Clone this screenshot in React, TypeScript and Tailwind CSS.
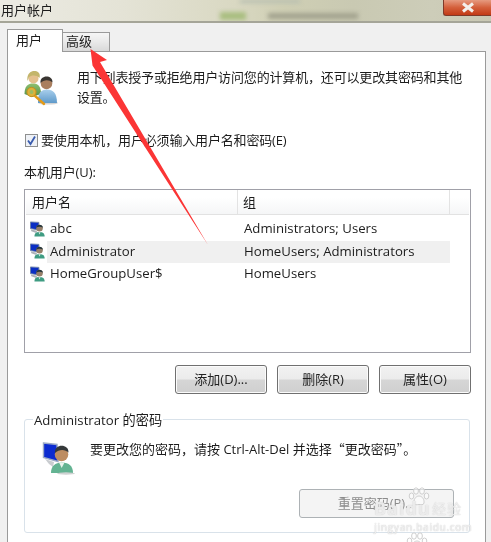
import React from "react";

const font = { fontFamily: '"Open Sans","Noto Sans CJK SC",sans-serif' };

function SmallUser() {
  return (
    <svg width="16" height="17" viewBox="0 0 18 18" className="shrink-0">
      <path d="M0.5 0.5 L10 1 L10 9.5 L0.5 8 Z" fill="#0b2fc4" stroke="#6b7fa6" strokeWidth="1" />
      <path d="M1 9 L8 10.5 L7 13 L1.5 11 Z" fill="#aeb2b8" />
      <path d="M5 17 C5 13 7 11.8 10.5 11.8 C14 11.8 16.5 13 16.5 17 Z" fill="#3f9c82" />
      <path d="M9.5 12 L10.7 14.5 L12 12 Z" fill="#d8ece4" />
      <circle cx="10.7" cy="7.6" r="3.7" fill="#97806a" />
      <path d="M7 7 C7 2.5 14.5 2.5 14.5 7 C12.5 5.4 9 5.4 7 7 Z" fill="#28383c" />
    </svg>
  );
}

function UsersIcon() {
  return (
    <svg width="34" height="36" viewBox="0 0 34 36" className="shrink-0">
      <defs>
        <linearGradient id="blueShirt" x1="0" y1="0" x2="0" y2="1">
          <stop offset="0" stopColor="#a9cfec" />
          <stop offset="1" stopColor="#5f9aca" />
        </linearGradient>
        <linearGradient id="greenShirt" x1="0" y1="0" x2="0" y2="1">
          <stop offset="0" stopColor="#8fc06f" />
          <stop offset="1" stopColor="#4f8f4c" />
        </linearGradient>
      </defs>
      <ellipse cx="24" cy="33" rx="10" ry="1.6" fill="#d4d4d4" />
      <path d="M0.5 24 C0.5 16 4 13.5 9 13.5 C14 13.5 17 16 17 24 L8 27 Z" fill="url(#greenShirt)" />
      <circle cx="9.5" cy="8.5" r="5" fill="#e4c08e" />
      <path d="M3.5 11 C2 2 10 -1 14.5 2.5 C16 4 16 6 15.5 8 C13 4.5 7 5 5 7 Z" fill="#c3b56b" />
      <path d="M14 33 C13.5 23 17 19.5 23 19.5 C29 19.5 33 23 33 33 Z" fill="url(#blueShirt)" />
      <circle cx="22.5" cy="13.5" r="5.8" fill="#a97e5e" />
      <path d="M16.5 13 C15.5 4.5 29 4.5 28.5 12.5 C25 9.5 20 9.5 16.5 13 Z" fill="#3a3632" />
      <path d="M10 25 L20 34" stroke="#e49a17" strokeWidth="2.4" strokeLinecap="round" />
      <circle cx="7.5" cy="22" r="4.6" fill="#dcb23a" stroke="#c4901c" strokeWidth="1" />
      <circle cx="7.5" cy="22" r="1.9" fill="#9dbb63" />
    </svg>
  );
}

function PasswordUser() {
  return (
    <svg width="34" height="33" viewBox="0 0 34 33" className="shrink-0">
      <path d="M1.5 1 L15 2.5 L16 19.5 L1.5 15.5 Z" fill="#0c2bd0" stroke="#9aa9c6" strokeWidth="1.4" />
      <path d="M3 17 L12 20 L11 25 L7 22 Z" fill="#c9ccd0" />
      <path d="M9 31 C9 24 13 20.5 20 20.5 C27 20.5 31 24 31 31 Z" fill="#63b392" />
      <path d="M17 20.5 L19.7 26 L22.5 20.5 Z" fill="#e8f2ec" />
      <circle cx="19.5" cy="12.5" r="6.8" fill="#bd8d62" />
      <path d="M13 11 C12 1.5 27 1.5 26.5 10.5 C23 7 17 7 13 11 Z" fill="#35393a" />
      <ellipse cx="24" cy="31.5" rx="9" ry="1.2" fill="#cfd2d2" />
    </svg>
  );
}

function Paw({ className = "" }: { className?: string }) {
  return (
    <svg width="22" height="20" viewBox="0 0 22 20" className={className}>
      <g fill="#ffffff" fillOpacity="0.55" stroke="#cfcfcf" strokeWidth="1">
        <ellipse cx="3.5" cy="9" rx="2.3" ry="3" />
        <ellipse cx="8" cy="4" rx="2.4" ry="3.2" />
        <ellipse cx="14" cy="4" rx="2.4" ry="3.2" />
        <ellipse cx="18.5" cy="9" rx="2.3" ry="3" />
        <path d="M11 9 C7.5 9 5.5 13 6 16 C6.5 18.5 9.5 17.5 11 17.5 C12.5 17.5 15.5 18.5 16 16 C16.5 13 14.5 9 11 9 Z" />
      </g>
    </svg>
  );
}

function WinButton({ children, className = "" }: { children: React.ReactNode; className?: string }) {
  return (
    <button
      className={`h-[29px] rounded-[3px] border border-[#707070] bg-[linear-gradient(#f2f2f2,#ebebeb_48%,#d6d6d6_52%,#cfcfcf)] shadow-[inset_0_0_0_1px_#fbfbfb] text-[13px] text-[#222] ${className}`}
    >
      {children}
    </button>
  );
}

const rows = [
  { name: "abc", group: "Administrators; Users" },
  { name: "Administrator", group: "HomeUsers; Administrators", selected: true },
  { name: "HomeGroupUser$", group: "HomeUsers" },
];

export default function App() {
  return (
    <div style={font} className="relative h-[542px] w-[491px] overflow-hidden bg-[#f0f0f0] text-[13px] text-[#1c1c1c] blur-[0.3px]">
      {/* title bar */}
      <div className="relative flex h-[23px] items-start justify-between overflow-hidden border-b-2 border-[#a5a598] bg-[linear-gradient(90deg,#ecebe3_0%,#e4e3d6_25%,#d9d8c2_48%,#cfcfb4_58%,#c9c9b2_72%,#cdcdb9_88%,#c9c8b4_100%)]">
        <span className="z-10 pl-px pt-px text-[13px] leading-[18px]">用户帐户</span>
        <div className="absolute left-[220px] top-[12px] h-[8px] w-[26px] bg-[#a9be80] blur-[2px]" />
        <div className="absolute left-[268px] top-[13px] h-[6px] w-[90px] bg-[#a3a38f] blur-[2px]" />
        <div className="absolute left-[240px] top-0 h-[3px] w-[60px] bg-[#b5bdb0] blur-[2px]" />
        <div className="z-10 flex h-[16px] w-[48px] items-center justify-center rounded-bl-[3px] border-b border-l border-[#7f3a2a] bg-[linear-gradient(#e69a80,#d4603c_50%,#c23a16)]">
          <svg width="14" height="11" viewBox="0 0 14 11">
            <path d="M2 1.5 L12 9.5 M12 1.5 L2 9.5" stroke="#f4f0ec" strokeWidth="3" />
          </svg>
        </div>
      </div>

      {/* tabs */}
      <div className="flex h-[28px] items-end pl-[7px] pt-[6px]">
        <div className="z-10 -mb-px flex h-[23px] w-[56px] items-start border border-b-0 border-[#9a9a9a] bg-white pl-[8px] pt-px text-[13px] leading-[18px]">
          用户
        </div>
        <div className="flex h-[19px] w-[47px] items-center border border-b-0 border-l-0 border-[#9a9a9a] bg-[linear-gradient(#f6f6f6,#e9e9e9_50%,#d9d9d9)] pl-[3px] text-[13px]">
          高级
        </div>
      </div>

      {/* panel */}
      <div className="ml-[7px] h-[600px] w-[479px] border border-[#9a9a9a] bg-white">
        <div className="flex pl-[16px] pr-[14px] pt-[15px]">
          <div className="w-[53px] pt-[3px]">
            <UsersIcon />
          </div>
          <p className="w-[395px] leading-[20px] tracking-[-0.16px]">
            用下列表授予或拒绝用户访问您的计算机，还可以更改其密码和其他设置。
          </p>
        </div>

        <div className="mt-[23px] flex items-center gap-[3px] pl-[17px]">
          <div className="flex h-[13px] w-[13px] items-center justify-center border border-[#8e8f8f] bg-[#eef1f6]">
            <svg width="11" height="11" viewBox="0 0 11 11">
              <path d="M2 5.5 L4.5 9 L9 1.5" fill="none" stroke="#3a5cae" strokeWidth="1.8" />
            </svg>
          </div>
          <span className="leading-[20px] tracking-[-0.16px]">要使用本机，用户必须输入用户名和密码(E)</span>
        </div>

        <div className="mt-[13px] pl-[16px] leading-[18px] tracking-[-0.1px]">本机用户(U):</div>

        {/* list */}
        <div className="ml-[16px] mt-[8px] h-[164px] w-[447px] border border-[#a0a0a8] bg-white">
          <div className="mx-[1px] flex h-[25px] items-center border-b border-[#e2e2e2] bg-[linear-gradient(#ffffff_30%,#f5f6f7)]">
            <div className="w-[212px] border-r border-[#e3e3e3] pl-[6px] leading-[24px]">用户名</div>
            <div className="w-[212px] border-r border-[#e3e3e3] pl-[5px] leading-[24px]">组</div>
          </div>
          <div className="pt-[3px]">
            {rows.map((r) => (
              <div key={r.name} className="flex h-[22.5px] items-center">
                <div className="flex w-[22px] justify-end pr-[1px]">
                  <SmallUser />
                </div>
                <div className={`flex h-[22px] w-[403px] items-center ${r.selected ? "bg-[#f0f0f0]" : ""}`}>
                  <span className="w-[197px] pl-[3px] text-[13.2px]">{r.name}</span>
                  <span className="text-[13.2px]">{r.group}</span>
                </div>
              </div>
            ))}
          </div>
        </div>

        {/* buttons */}
        <div className="ml-[167px] mt-[12px] flex gap-[10px]">
          <WinButton className="w-[92px]">添加(D)...</WinButton>
          <WinButton className="w-[92px]">删除(R)</WinButton>
          <WinButton className="w-[92px]">属性(O)</WinButton>
        </div>

        {/* group */}
        <div className="relative ml-[16px] mt-[25px] h-[114px] w-[446px] rounded-[3px] border border-[#d9e2ea]">
          <span className="absolute -top-[10px] left-[8px] bg-white px-px text-[13.2px] leading-[20px]">
            Administrator 的密码
          </span>
          <div className="flex items-start pl-[17px] pt-[22px]">
            <PasswordUser />
            <span className="ml-[14px] mt-[-3px] text-[13px] leading-[20px]">
              要更改您的密码，请按 Ctrl-Alt-Del 并选择
              <span className="font-['Noto_Sans_CJK_SC']">“更改密码”</span>。
            </span>
          </div>
          <div className="ml-[274px] mt-[14px] flex h-[29px] w-[155px] items-center justify-center rounded-[3px] border border-[#adb2b5] bg-[#f4f4f4] text-[13px] text-[#8b8b8b]">
            重置密码(P)...
          </div>
        </div>
      </div>

      {/* annotation arrow */}
      <svg className="pointer-events-none absolute left-0 top-0" width="491" height="542" viewBox="0 0 491 542">
        <path d="M90.5 49 L107 60 L100 62 L208 245 L92.5 65.5 Z" fill="#fb3535" />
      </svg>

      {/* watermark */}
      <Paw className="pointer-events-none absolute left-[408px] top-[487px]" />
      <Paw className="pointer-events-none absolute left-[406px] top-[532px]" />
      <div className="pointer-events-none absolute left-[374px] top-[495px] text-white/70 [text-shadow:0_0_1px_#b8b8b8]">
        <div className="flex h-[24px] items-end">
          <span className="w-[58px] text-[18px] font-bold leading-[22px] tracking-[1px]">Baidu</span>
          <span className="text-[14px] leading-[20px] tracking-[1px]">经验</span>
        </div>
        <div className="mt-[1px] text-[10.5px] font-semibold leading-[14px] tracking-[0.3px]">jingyan.baidu.com</div>
      </div>
    </div>
  );
}
